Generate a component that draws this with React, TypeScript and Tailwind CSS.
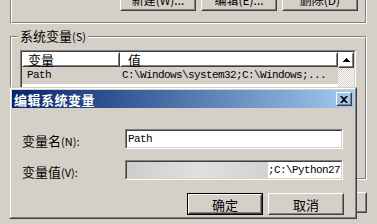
import React from 'react'

const cjk = "font-['Noto_Sans_CJK_SC',sans-serif]"
const mono = "font-['Liberation_Mono',monospace] text-[11px] tracking-[-0.6px]"

function Btn({children, className = '', def = false}: {children?: React.ReactNode; className?: string; def?: boolean}) {
  return (
    <div className={(def ? 'border border-black ' : '') + className}>
      <div className="h-full border border-t-white border-l-white border-r-[#404040] border-b-[#404040]">
        <div className="h-full flex items-center justify-center border border-t-transparent border-l-transparent border-r-[#808080] border-b-[#808080]">
          {children}
        </div>
      </div>
    </div>
  )
}

function Sunken({children, className = '', inner = 'bg-white'}: {children?: React.ReactNode; className?: string; inner?: string}) {
  return (
    <div className={'border border-t-[#808080] border-l-[#808080] border-r-white border-b-white ' + className}>
      <div className={'h-full border border-t-[#404040] border-l-[#404040] border-r-[#d4d0c8] border-b-[#d4d0c8] ' + inner}>
        {children}
      </div>
    </div>
  )
}

function Etched({children, className = ''}: {children?: React.ReactNode; className?: string}) {
  return (
    <div className={'relative border border-t-[#808080] border-l-[#808080] border-r-white border-b-white ' + className}>
      <div className="h-full border border-t-white border-l-white border-r-[#808080] border-b-[#808080]">{children}</div>
    </div>
  )
}

function Label({text, key2}: {text: string; key2: string}) {
  return (
    <span className={cjk + ' text-[13px] text-black leading-none'}>
      {text}
      <span className="text-[11px]">({key2}):</span>
    </span>
  )
}

export default function App() {
  return (
    <div className={'relative w-[377px] h-[224px] overflow-hidden bg-[#d4d0c8] ' + cjk}>
      {/* environment variables window behind */}
      <div className="flex flex-col">
        <Etched className="ml-[10px] w-[357px] mt-[-40px] h-[64px]">
          <div className="h-full flex items-end justify-end gap-[5px] pr-[7px] pb-[11px]">
            {['新建(W)...', '编辑(E)...', '删除(D)'].map(t => (
              <Btn key={t} className="w-[76px] h-[23px]">
                <span className="text-[12px] leading-none">{t}</span>
              </Btn>
            ))}
          </div>
        </Etched>

        <Etched className="ml-[10px] w-[357px] mt-[12px] h-[144px]">
          <span className="absolute left-[7px] top-[-9px] bg-[#d4d0c8] px-[2px] text-[13px] leading-[16px] text-black">
            系统变量<span className="text-[11px]">(S)</span>
          </span>
          <Sunken className="ml-[8px] mt-[12px] w-[336px] h-[96px]">
            <div className="flex h-full">
              <div className="flex-1 flex flex-col">
                <div className="flex h-[15px]">
                  <Btn className="w-[98px] h-[15px]">
                    <span className="w-full pl-[4px] text-[13px] leading-none">变量</span>
                  </Btn>
                  <Btn className="flex-1 h-[15px]">
                    <span className="w-full pl-[6px] text-[13px] leading-none">值</span>
                  </Btn>
                </div>
                <div className="flex items-center h-[17px] bg-[#d4d0c8]">
                  <span className={mono + ' w-[98px] pl-[5px]'}>Path</span>
                  <span className={mono + ' pl-[2px]'}>C:\Windows\system32;C:\Windows;...</span>
                </div>
              </div>
              <div className="w-[16px] flex flex-col">
                <Btn className="w-[16px] h-[16px]">
                  <svg width="7" height="4" viewBox="0 0 7 4">
                    <path d="M3 0h1v1h1v1h1v1h1v1H0V3h1V2h1V1h1z" fill="#000" />
                  </svg>
                </Btn>
                <div className="flex-1 bg-[repeating-conic-gradient(#ffffff_0_25%,#d4d0c8_0_50%)] bg-[length:2px_2px]" />
              </div>
            </div>
          </Sunken>
        </Etched>

        <div className="flex justify-end gap-[6px] mt-[12px] pr-[10px]">
          <Btn className="w-[75px] h-[21px]" />
          <Btn className="w-[75px] h-[21px]" />
        </div>
      </div>

      {/* edit system variable dialog */}
      <div className="absolute left-[9px] top-[87px] w-[348px] h-[132px] border border-t-[#d4d0c8] border-l-[#d4d0c8] border-r-[#404040] border-b-[#404040]">
        <div className="h-full border border-t-white border-l-white border-r-[#808080] border-b-[#808080] p-px flex flex-col bg-[#d4d0c8]">
          <div className="h-[18px] flex items-center justify-between pl-[2px] pr-[2px] bg-linear-to-r from-[#0a246a] to-[#a6caf0]">
            <span className="text-[13px] font-bold text-white leading-none tracking-[0.5px]">编辑系统变量</span>
            <Btn className="w-[16px] h-[14px]">
              <svg width="8" height="7" viewBox="0 0 8 7">
                <path d="M0 0h2l2 2 2-2h2L5 3.5 8 7H6L4 5 2 7H0l3-3.5z" fill="#000" />
              </svg>
            </Btn>
          </div>

          <div className="flex flex-col pt-[19px] pl-[10px] pr-[10px]">
            <div className="flex items-center">
              <div className="w-[103px]">
                <Label text="变量名" key2="N" />
              </div>
              <Sunken className="w-[218px] h-[20px]">
                <div className="h-full flex items-center pl-[1px]">
                  <span className={mono}>Path</span>
                </div>
              </Sunken>
            </div>
            <div className="flex items-center mt-[7px]">
              <div className="w-[103px]">
                <Label text="变量值" key2="V" />
              </div>
              <Sunken className="w-[218px] h-[20px]">
                <div className="h-full flex items-stretch">
                  <div className="flex-1 bg-linear-to-r from-[#cdcdcd] via-[#e0e0e0] to-[#d2d2d2]" />
                  <span className={mono + ' flex items-center bg-white pr-[1px]'}>;C:\Python27</span>
                </div>
              </Sunken>
            </div>
            <div className="flex justify-end gap-[5px] mt-[11px]">
              <Btn def className="w-[76px] h-[22px]">
                <span className="text-[13px] leading-none">确定</span>
              </Btn>
              <Btn className="w-[76px] h-[22px]">
                <span className="text-[13px] leading-none">取消</span>
              </Btn>
            </div>
          </div>
        </div>
      </div>
    </div>
  )
}
